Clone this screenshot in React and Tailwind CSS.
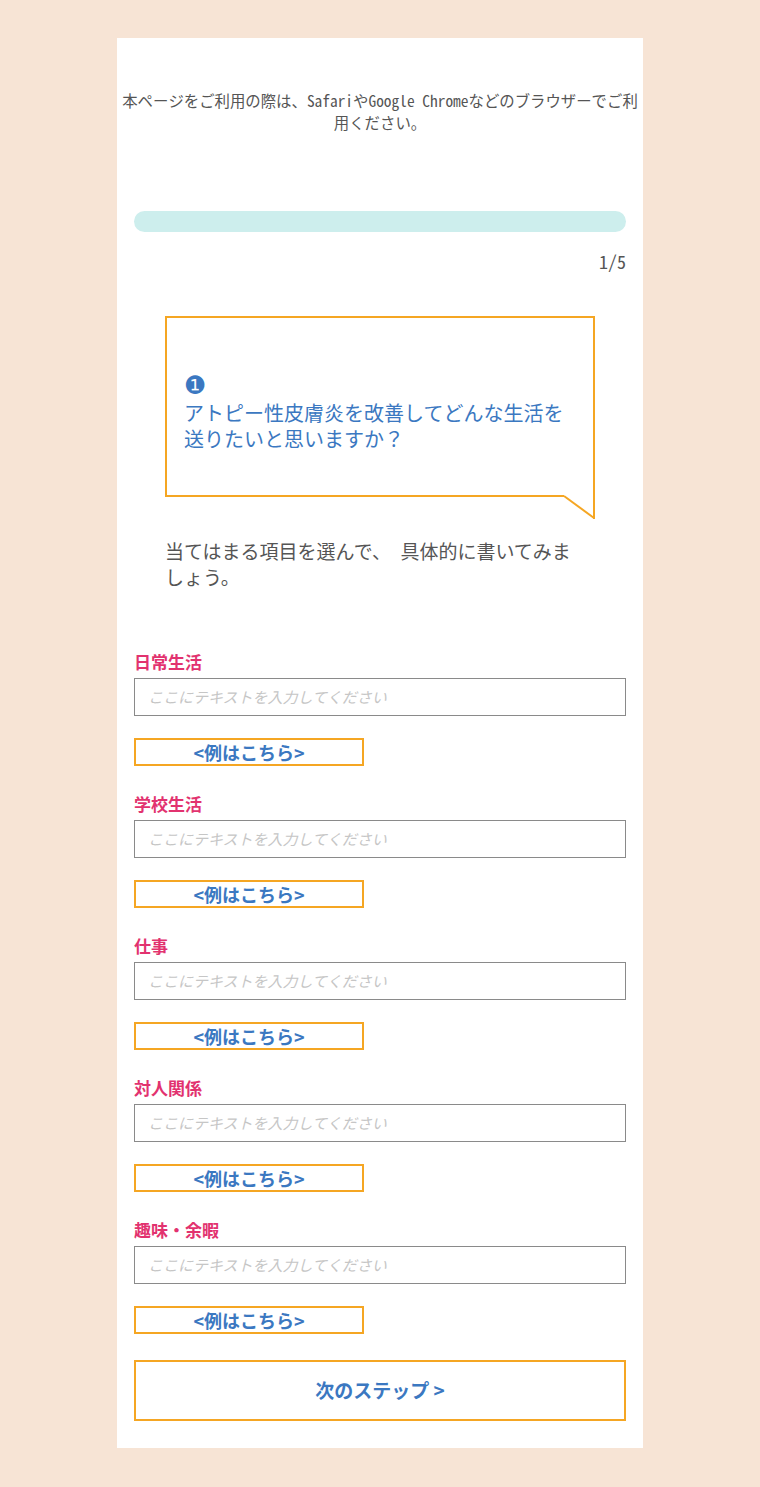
const sections = ["日常生活", "学校生活", "仕事", "対人関係", "趣味・余暇"];

const Section = ({ label }) => (
  <div className="mb-[26px]">
    <p className="text-[17px] leading-[24px] font-bold text-[#e2326f]">{label}</p>
    <input
      type="text"
      placeholder="ここにテキストを入力してください"
      className="mt-1 block h-[38px] w-full border border-[#8a8a8a] bg-white px-[13px] text-[15px] outline-none placeholder:italic placeholder:text-[#c6c6c6]"
    />
    <button className="mt-[22px] block h-[28px] w-[230px] border-2 border-[#f5a623] text-[18px] leading-none font-bold text-[#3b78c1]">
      &lt;例はこちら&gt;
    </button>
  </div>
);

const App = () => {
  return (
    <div className="min-h-[1487px] w-full bg-[#f7e4d5] pt-[38px] pb-[39px] font-['Noto_Sans_CJK_JP','Noto_Sans',sans-serif]">
      <div className="mx-auto w-[526px] bg-white px-[17px] pt-[51px] pb-[27px]">
        {/* browser notice */}
        <p className="-mx-[13px] text-center text-[15.4px] leading-[22px] text-[#555] font-['Noto_Sans_Mono_CJK_JP','DejaVu_Sans_Mono',monospace]">
          本ページをご利用の際は、SafariやGoogle Chromeなどのブラウザーでご利用ください。
        </p>

        {/* progress */}
        <div className="mt-[78px] h-[21px] w-full rounded-full bg-[#cdeeed]"></div>
        <p className="mt-[17px] text-right text-[18px] leading-[24px] text-[#555] font-['Noto_Sans_Mono_CJK_JP','DejaVu_Sans_Mono',monospace]">
          1/5
        </p>

        {/* question bubble */}
        <div className="relative mx-[31px] mt-[43px] border-2 border-[#f5a623] pt-[55px] pr-[17px] pb-[42px] pl-[17px]">
          <div className="text-[20px] leading-[26.5px] text-[#3b78c1]">
            <p className="text-[25px] leading-[26.5px] font-['DejaVu_Sans',sans-serif]">❶</p>
            <p>アトピー性皮膚炎を改善してどんな生活を送りたいと思いますか？</p>
          </div>
          <svg className="absolute right-[-2px] bottom-[-25px]" width="32" height="26" viewBox="0 0 32 26">
            <rect x="1" y="0" width="29" height="5" fill="#fff" />
            <line x1="1" y1="2" x2="31" y2="24" stroke="#f5a623" strokeWidth="2" />
            <line x1="31" y1="0" x2="31" y2="25" stroke="#f5a623" strokeWidth="2" />
          </svg>
        </div>

        <p className="mt-[41px] ml-[31px] mr-[40px] text-[19px] leading-[26px] text-[#555]">
          当てはまる項目を選んで、　具体的に書いてみましょう。
        </p>

        <div className="mt-[60px]">
          {sections.map((s) => (
            <Section key={s} label={s} />
          ))}
        </div>

        <button className="mt-[2px] flex h-[61px] w-full items-center justify-center border-2 border-[#f5a623] text-[19px] font-bold text-[#3b78c1]">
          次のステップ &gt;
        </button>
      </div>
    </div>
  );
};

export default App;
